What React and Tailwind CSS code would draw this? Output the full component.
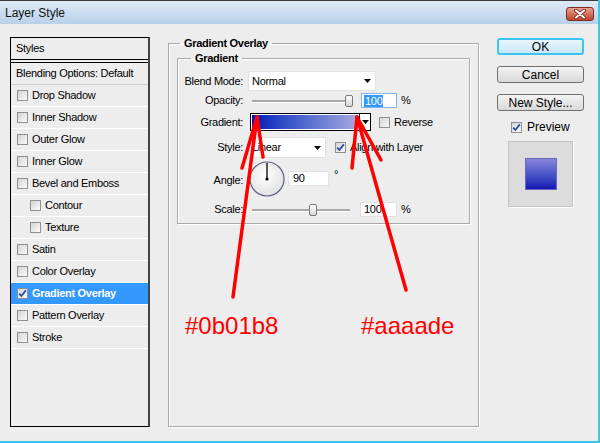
// Photoshop "Layer Style" dialog, Gradient Overlay tab, with the two red colour callouts

function CheckBox({ checked = false }) {
  return (
    <div className="w-[11px] h-[11px] shrink-0 border border-[#8e8f8f] bg-linear-to-br from-[#d4d4d4] to-[#fbfbfb] flex items-center justify-center">
      {checked && (
        <svg viewBox="0 0 9 9" className="w-[9px] h-[9px]">
          <path d="M1.2 4.6 L3.4 7 L7.8 1.4" fill="none" stroke="#2348a8" strokeWidth="1.7" />
        </svg>
      )}
    </div>
  );
}

function Arrow() {
  return (
    <svg viewBox="0 0 7 4" className="w-[7px] h-[4px]">
      <path d="M0 0 H7 L3.5 4 Z" fill="#000" />
    </svg>
  );
}

function Slider({ pos }) {
  return (
    <div className="relative ml-[4px] w-[98px] h-[15px] flex items-center">
      <div className="w-full h-[2px] bg-[#a9a9a9] shadow-[0_1px_0_#ffffff]" />
      <div
        className="absolute top-[2px] w-[8px] h-[12px] rounded-[2px] border border-[#7a7a7a] bg-linear-to-b from-[#ffffff] to-[#d6d6d6]"
        style={{ left: pos }}
      />
    </div>
  );
}

const styleRows = [
  { name: 'Drop Shadow' },
  { name: 'Inner Shadow' },
  { name: 'Outer Glow' },
  { name: 'Inner Glow' },
  { name: 'Bevel and Emboss' },
  { name: 'Contour', indent: true },
  { name: 'Texture', indent: true },
  { name: 'Satin' },
  { name: 'Color Overlay' },
  { name: 'Gradient Overlay', selected: true },
  { name: 'Pattern Overlay' },
  { name: 'Stroke' },
];

function Btn({ children, primary }) {
  return (
    <div
      className={
        primary
          ? 'w-[87px] h-[17px] rounded-[3px] border-2 border-[#3cc4f4] bg-linear-to-b from-[#eaf6fd] to-[#c9e7f7] flex items-center justify-center text-[12px] leading-none'
          : 'w-[87px] h-[17px] rounded-[3px] border border-[#707070] bg-linear-to-b from-[#f3f3f3] to-[#d9d9d9] flex items-center justify-center text-[12px] leading-none'
      }
    >
      {children}
    </div>
  );
}

export default function App() {
  return (
    <div className="relative w-[600px] h-[443px] overflow-hidden bg-[#ededed] font-['Liberation_Sans',Arial,sans-serif] text-black text-[11px] tracking-[-0.3px] border-b-2 border-r-2 border-[#3ec6e6] flex flex-col">
      {/* title bar */}
      <div className="h-[24px] shrink-0 border-t border-[#3a3a3a] bg-linear-to-b from-[#e0eaf6] to-[#b9d0ea] flex items-start">
        <span className="ml-[5px] mt-[5px] text-[12px] leading-[14px] tracking-normal text-[#111]">Layer Style</span>
        <div className="ml-auto mr-[4px] mt-[6px] w-[28px] h-[14px] rounded-[3px] border border-[#7a2b22] bg-linear-to-b from-[#e6a08f] to-[#c0412d] flex items-center justify-center">
          <svg viewBox="0 0 12 10" className="w-[12px] h-[10px]">
            <path d="M2 1.5 L10 8.5 M10 1.5 L2 8.5" stroke="#6b2018" strokeWidth="3.6" strokeLinecap="round" />
            <path d="M2 1.5 L10 8.5 M10 1.5 L2 8.5" stroke="#ffffff" strokeWidth="2" strokeLinecap="round" />
          </svg>
        </div>
      </div>

      {/* body */}
      <div className="flex-1 flex items-start pl-[10px] pt-[13px]">
        {/* styles list */}
        <div className="w-[140px] h-[390px] border border-black border-r-2 border-r-[#444] flex flex-col">
          <div className="h-[22px] border-b border-black flex items-center pl-[5px]">Styles</div>
          <div className="h-[3px] border-b border-black" />
          <div className="h-[22px] border-b border-[#cfcfcf] flex items-center pl-[5px]">Blending Options: Default</div>
          {styleRows.map((r) => (
            <div
              key={r.name}
              className={
                r.selected
                  ? 'h-[22px] border-b border-white bg-[#3399ff] text-white font-bold flex items-center pl-[6px]'
                  : 'h-[22px] border-b border-white flex items-center pl-[6px]'
              }
            >
              {r.indent && <div className="w-[13px]" />}
              <CheckBox checked={r.selected} />
              <span className="ml-[4px]">{r.name}</span>
            </div>
          ))}
        </div>

        {/* main panel */}
        <fieldset className="ml-[18px] w-[311px] h-[390px] border border-[#a9a9a9] shadow-[inset_1px_1px_0_#ffffff,1px_1px_0_#ffffff] px-[8px]">
          <legend className="ml-[3px] px-[4px] font-bold leading-[13px]">Gradient Overlay</legend>
          <fieldset className="mt-[2px] border border-[#a9a9a9] shadow-[inset_1px_1px_0_#ffffff,1px_1px_0_#ffffff] pt-[6px] pb-[6px]">
            <legend className="ml-[13px] px-[4px] font-bold leading-[13px]">Gradient</legend>

            <div className="flex items-center h-[20px]">
              <span className="w-[65px] text-right">Blend Mode:</span>
              <div className="ml-[5px] w-[128px] h-[20px] bg-white border border-[#e2e2e2] flex items-center pl-[3px] pr-[4px]">
                <span>Normal</span>
                <div className="ml-auto"><Arrow /></div>
              </div>
            </div>

            <div className="flex items-center h-[15px] mt-[2px]">
              <span className="w-[65px] text-right">Opacity:</span>
              <div className="ml-[5px] flex items-center">
                <Slider pos={93} />
                <div className="ml-[11px] w-[36px] h-[15px] bg-white border border-[#7eb4ea] flex items-center pl-[2px]">
                  <span className="bg-[#3399ff] text-white leading-[12px] px-[1px]">100</span>
                </div>
                <span className="ml-[4px]">%</span>
              </div>
            </div>

            <div className="flex items-center h-[18px] mt-[5px]">
              <span className="w-[65px] text-right">Gradient:</span>
              <div className="ml-[7px] flex items-center">
                <div className="w-[110px] h-[18px] border border-black shadow-[inset_0_0_0_1px_#ffffff] bg-linear-to-r from-[#0b01b8] to-[#aaaade]" />
                <div className="w-[12px] h-[18px] -ml-px bg-white border border-black flex items-center justify-center">
                  <Arrow />
                </div>
                <div className="ml-[8px]"><CheckBox /></div>
                <span className="ml-[4px]">Reverse</span>
              </div>
            </div>

            <div className="flex items-center h-[21px] mt-[6px]">
              <span className="w-[65px] text-right">Style:</span>
              <div className="ml-[5px] w-[78px] h-[21px] bg-white border border-[#e2e2e2] flex items-center pl-[3px] pr-[4px]">
                <span>Linear</span>
                <div className="ml-auto"><Arrow /></div>
              </div>
              <div className="ml-[9px]"><CheckBox checked /></div>
              <span className="ml-[4px]">Align with Layer</span>
            </div>

            <div className="flex items-start h-[36px] mt-[3px]">
              <span className="w-[65px] text-right mt-[11px]">Angle:</span>
              <svg viewBox="0 0 36 36" className="ml-[6px] w-[36px] h-[36px]">
                <defs>
                  <radialGradient id="dial" cx="45%" cy="40%" r="60%">
                    <stop offset="0%" stopColor="#ffffff" />
                    <stop offset="100%" stopColor="#e2e2e2" />
                  </radialGradient>
                </defs>
                <circle cx="18" cy="18" r="17" fill="url(#dial)" stroke="#56627c" strokeWidth="1.2" />
                <line x1="18" y1="18" x2="18" y2="2" stroke="#000" strokeWidth="1.3" />
                <circle cx="18" cy="18" r="1.6" fill="#000" />
              </svg>
              <div className="ml-[3px] mt-[10px] w-[41px] h-[15px] bg-white border border-[#e2e2e2] flex items-center pl-[4px]">90</div>
              <span className="ml-[5px] mt-[5px]">°</span>
            </div>

            <div className="flex items-center h-[15px] mt-[5px]">
              <span className="w-[65px] text-right">Scale:</span>
              <div className="ml-[5px] flex items-center">
                <Slider pos={57} />
                <div className="ml-[10px] w-[37px] h-[15px] bg-white border border-[#e2e2e2] flex items-center pl-[3px]">100</div>
                <span className="ml-[4px]">%</span>
              </div>
            </div>
          </fieldset>
        </fieldset>

        {/* buttons column */}
        <div className="ml-[18px] mt-[1px] w-[87px] flex flex-col tracking-normal">
          <Btn primary>OK</Btn>
          <div className="mt-[11px]"><Btn>Cancel</Btn></div>
          <div className="mt-[11px]"><Btn>New Style...</Btn></div>
          <div className="mt-[10px] pl-[14px] flex items-center">
            <CheckBox checked />
            <span className="ml-[5px] text-[12px] leading-[12px]">Preview</span>
          </div>
          <div className="mt-[8px] ml-[11px] w-[65px] h-[66px] bg-[#dcdcdc] border border-[#c4c4c4] shadow-[1px_1px_0_#ffffff] flex items-center justify-center">
            <div className="w-[32px] h-[32px] border border-[#6a66c4] bg-linear-to-b from-[#8a84da] to-[#1910b4]" />
          </div>
        </div>
      </div>

      {/* red callouts drawn over the dialog */}
      <svg viewBox="0 0 600 443" className="absolute inset-0 w-[600px] h-[443px] pointer-events-none">
        <g stroke="#ff0000" strokeWidth="3.5" strokeLinecap="round" fill="none">
          <path d="M233 297 L257 117" />
          <path d="M257 117 L242 168 M257 117 L263 157" />
          <path d="M406 290 L357 117" />
          <path d="M357 117 L352 168 M357 117 L381 160" />
        </g>
      </svg>
      <div className="absolute left-[185px] top-[314px] text-[24px] leading-none tracking-normal text-[#ff0000]">#0b01b8</div>
      <div className="absolute left-[361px] top-[314px] text-[24px] leading-none tracking-normal text-[#ff0000]">#aaaade</div>
    </div>
  );
}
